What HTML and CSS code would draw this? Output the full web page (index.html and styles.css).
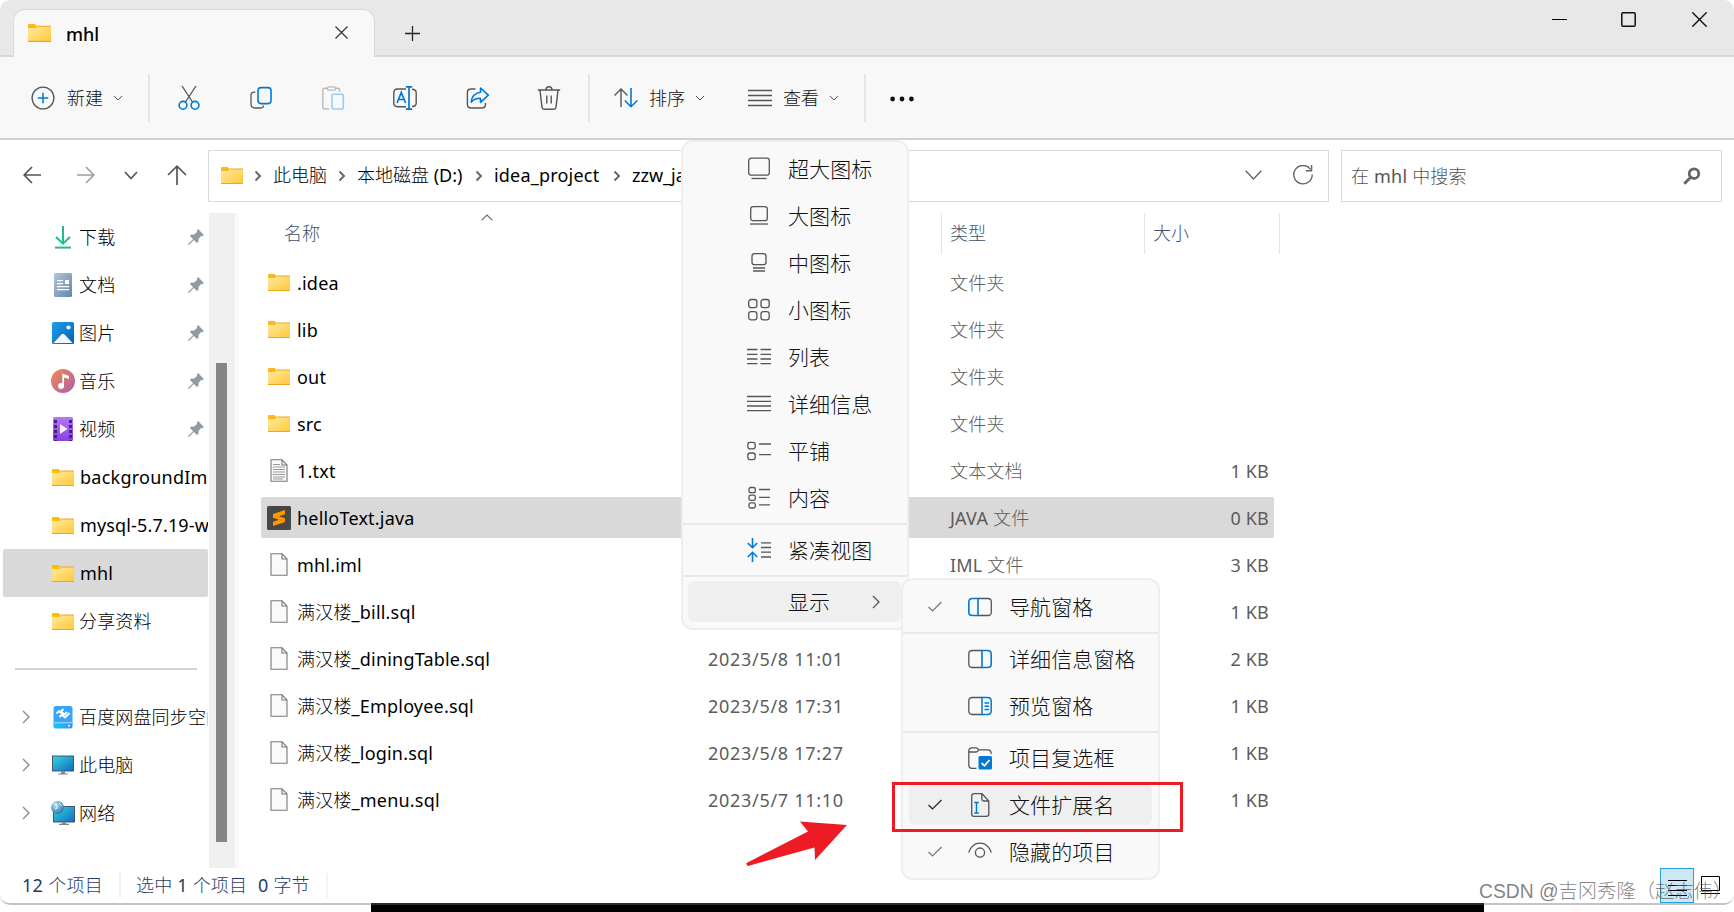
FILE: index.html
```html
<!DOCTYPE html>
<html lang="zh-CN">
<head>
  <meta charset="utf-8">
  <title>mhl</title>
  <link rel="stylesheet" href="styles.css">
</head>
<body>
  <!-- shared icons -->
  <svg class="defs" width="0" height="0">
    <defs>
      <linearGradient id="gFolder" x1="0" y1="0" x2="1" y2="1"><stop offset="0" stop-color="#ffe9a2"/><stop offset="1" stop-color="#ffc937"/></linearGradient>
      <linearGradient id="gDown" x1="0" y1="0" x2="0" y2="1"><stop offset="0" stop-color="#3fd08c"/><stop offset="1" stop-color="#0fa596"/></linearGradient>
      <linearGradient id="gDoc" x1="0" y1="0" x2="1" y2="1"><stop offset="0" stop-color="#b4c4d8"/><stop offset="1" stop-color="#6186ab"/></linearGradient>
      <linearGradient id="gPic" x1="0" y1="0" x2="1" y2="1"><stop offset="0" stop-color="#1ca0ec"/><stop offset="1" stop-color="#0a5fb4"/></linearGradient>
      <linearGradient id="gMusic" x1="0" y1="0" x2="1" y2="1"><stop offset="0" stop-color="#f58d4c"/><stop offset="1" stop-color="#a95bb0"/></linearGradient>
      <linearGradient id="gVideo" x1="0" y1="0" x2="0" y2="1"><stop offset="0" stop-color="#b478f5"/><stop offset="1" stop-color="#8a41e0"/></linearGradient>
      <linearGradient id="gPc" x1="0" y1="0" x2="1" y2="1"><stop offset="0" stop-color="#37d6dc"/><stop offset="1" stop-color="#0f6cc4"/></linearGradient>
      <linearGradient id="gDisk" x1="0" y1="0" x2="1" y2="0"><stop offset="0" stop-color="#0cc8fb"/><stop offset="1" stop-color="#3d8ffb"/></linearGradient>
      <radialGradient id="gGlobe" cx=".35" cy=".3" r=".8"><stop offset="0" stop-color="#b9e2f5"/><stop offset="1" stop-color="#1b6ea8"/></radialGradient>
      <symbol id="folder" viewBox="0 0 22 17">
        <path d="M0 1.2Q0 0 1.2 0H6.5L8.5 2V4H0Z" fill="#fdb813"/>
        <path d="M0 4H7L9 2H22V17H0Z" fill="url(#gFolder)"/>
        <path d="M8.5 2H22M0 16.5H22" stroke="#e9a820" stroke-width="1"/>
      </symbol>
      <symbol id="file" viewBox="0 0 18 23">
        <path d="M1 .8H12L17 6V22.2H1Z" fill="#fafafa" stroke="#777" stroke-width="1.1"/>
        <path d="M12 .8V6H17" fill="none" stroke="#777" stroke-width="1.1"/>
      </symbol>
      <symbol id="chev" viewBox="0 0 10 10"><path d="M1 3L5 7L9 3" fill="none" stroke="currentColor" stroke-width="1"/></symbol>
      <symbol id="crumb" viewBox="0 0 8 12"><path d="M1.5 1.5L6 6L1.5 10.5" fill="none" stroke="#666" stroke-width="1.9"/></symbol>
      <symbol id="expand" viewBox="0 0 8 14"><path d="M1 1L7 7L1 13" fill="none" stroke="#8b8b8b" stroke-width="1.4"/></symbol>
      <symbol id="check" viewBox="0 0 14 11"><path d="M.5 6L4.5 10L13.5 1" fill="none" stroke="currentColor" stroke-width="1.2"/></symbol>
      <symbol id="pin" viewBox="0 0 16 16"><path d="M10 0L16 6L14.5 7.2L13.3 6.8L10.6 10L10.4 13L9 14L5.8 11L1.2 15.8L0 16L.3 14.8L5 10.2L2 7L3 5.6L6.2 5.5L9.2 2.8L8.8 1.3Z" fill="#929ca5"/></symbol>
    </defs>
  </svg>

  <div class="window">
    <div class="titlebar">
      <div class="tab">
        <svg class="tab-folder"><use href="#folder"/></svg>
        <span class="tab-title">mhl</span>
        <svg class="tab-close" viewBox="0 0 13 13"><path d="M.5 .5L12.5 12.5M12.5 .5L.5 12.5" stroke="#333" stroke-width="1.2"/></svg>
      </div>
      <svg class="tab-add" viewBox="0 0 15 15"><path d="M7.5 0V15M0 7.5H15" stroke="#222" stroke-width="1.3"/></svg>
      <div class="controls">
        <svg width="15" height="15" viewBox="0 0 15 15"><path d="M0 7.5H15" stroke="#000" stroke-width="1.1"/></svg>
        <svg class="max" width="15" height="15" viewBox="0 0 15 15"><rect x=".8" y=".8" width="13.4" height="13.4" rx="1.2" fill="none" stroke="#111" stroke-width="1.5"/></svg>
        <svg width="15" height="15" viewBox="0 0 15 15"><path d="M.3 .3L14.7 14.7M14.7 .3L.3 14.7" stroke="#111" stroke-width="1.4"/></svg>
      </div>
    </div>

    <div class="toolbar">
      <div class="tool new">
        <svg width="24" height="24" viewBox="0 0 24 24" fill="none"><circle cx="12" cy="12" r="10.9" stroke="#555" stroke-width="1.3"/><path d="M12 6.8V17.2M6.8 12H17.2" stroke="#0078d4" stroke-width="1.5"/></svg>
        <span>新建</span>
        <svg class="chev"><use href="#chev"/></svg>
      </div>
      <div class="divider"></div>
      <div class="icons">
        <svg viewBox="0 0 24 24"><path d="M5 0L15.5 16M19 0L8.5 16" stroke="#555" stroke-width="1.3"/><g stroke="#0078d4" stroke-width="1.6"><circle cx="6" cy="19.3" r="3.9"/><circle cx="18" cy="19.3" r="3.9"/></g></svg>
        <svg viewBox="0 0 24 24"><path d="M6.3 6.2H5Q2 6.2 2 9.5V18Q2 22 6 22H11Q14.5 22 14.5 19.5" stroke="#555" stroke-width="1.3"/><rect x="9" y="1.6" width="13" height="16" rx="3" stroke="#0078d4" stroke-width="1.6"/></svg>
        <svg viewBox="0 0 24 24"><path d="M6 2.3H3.5Q1.8 2.3 1.8 4V21.5Q1.8 23 3.5 23H8M15 2.3H17Q18.6 2.3 18.6 4V6" stroke="#b9b9b9" stroke-width="1.4"/><rect x="6.3" y=".8" width="8.4" height="3.4" rx="1.7" stroke="#b9b9b9" stroke-width="1.3"/><rect x="11" y="8.2" width="11.3" height="14.8" rx="1.4" fill="#f5faff" stroke="#9dcbf0" stroke-width="1.6"/></svg>
        <svg viewBox="0 0 24 24"><path d="M13 3H4.5Q.8 3 .8 7V17Q.8 20.7 4.5 20.7H13M19 3.2Q23.2 3.2 23.2 7V17Q23.2 20.5 19 20.5" stroke="#555" stroke-width="1.4"/><path d="M4 17L8.3 6.5L12.6 17M5.4 13.5H11.2M12.8 .8H19.2M12.8 23.2H19.2M16 .8V23.2" stroke="#0078d4" stroke-width="1.7"/></svg>
        <svg viewBox="0 0 24 24"><path d="M10.5 3H6Q2.4 3 2.4 6.5V18.5Q2.4 22 6 22H16.5Q20.5 22 20.5 18.5V17" stroke="#555" stroke-width="1.4"/><path d="M15.5 2L23.3 9.2L15.5 16.3V12.2Q9.5 12 6.2 16.2Q7 7.5 15.5 6.3Z" stroke="#0078d4" stroke-width="1.6" stroke-linejoin="round"/></svg>
        <svg viewBox="0 0 24 24"><path d="M.8 4H23.2M3 4L5 21.3Q5.3 23.2 7 23.2H17Q18.7 23.2 19 21.3L21 4M9 3.8Q9 .8 12 .8Q15 .8 15 3.8M9.8 9.5V17.5M14.2 9.5V17.5" stroke="#555" stroke-width="1.4"/></svg>
      </div>
      <div class="divider"></div>
      <div class="tool sort">
        <svg width="24" height="20" viewBox="0 0 24 20" fill="none"><path d="M7 19V1M.5 7.5L7 1L13.5 7.5" stroke="#555" stroke-width="1.4"/><path d="M17 0V18.5M10.8 12.5L17 18.7L23.4 12.5" stroke="#0078d4" stroke-width="1.6"/></svg>
        <span>排序</span>
        <svg class="chev"><use href="#chev"/></svg>
      </div>
      <div class="tool view">
        <svg width="24" height="18" viewBox="0 0 24 18"><path d="M0 1.5H24M0 6.5H24M0 11.5H24M0 16.5H24" stroke="#555" stroke-width="1.4"/></svg>
        <span>查看</span>
        <svg class="chev"><use href="#chev"/></svg>
      </div>
      <div class="divider"></div>
      <svg class="more" viewBox="0 0 24 6"><circle cx="2.6" cy="3" r="2.4"/><circle cx="12" cy="3" r="2.4"/><circle cx="21.4" cy="3" r="2.4"/></svg>
    </div>

    <div class="navbar">
      <div class="arrows">
        <svg width="18" height="18" viewBox="0 0 18 18"><path d="M18 9H1.2M9 1L1.2 9L9 17" stroke="#555" stroke-width="1.7"/></svg>
        <svg class="forward" width="18" height="18" viewBox="0 0 18 18"><path d="M0 9H16.8M9 1L16.8 9L9 17" stroke="#a0a0a0" stroke-width="1.7"/></svg>
        <svg class="recent" width="14" height="9" viewBox="0 0 14 9"><path d="M1 1L7 7.5L13 1" stroke="#555" stroke-width="1.7"/></svg>
        <svg class="up" width="20" height="20" viewBox="0 0 20 20"><path d="M10 20V1.2M1 10L10 1.2L19 10" stroke="#555" stroke-width="1.7"/></svg>
      </div>
      <div class="address">
        <svg class="icon-folder"><use href="#folder"/></svg>
        <svg class="crumb"><use href="#crumb"/></svg>
        <span class="c1">此电脑</span>
        <svg class="crumb"><use href="#crumb"/></svg>
        <span class="c2">本地磁盘 (D:)</span>
        <svg class="crumb"><use href="#crumb"/></svg>
        <span class="c3">idea_project</span>
        <svg class="crumb"><use href="#crumb"/></svg>
        <span class="c4">zzw_java</span>
        <svg class="addr-drop" viewBox="0 0 17 10"><path d="M.7 .7L8.5 9L16.3 .7" fill="none" stroke="#666" stroke-width="1.4"/></svg>
        <svg class="refresh" viewBox="0 0 20 20"><path d="M17.5 4.3A9.2 9.2 0 1 0 19.2 9.5M18.6 0V5.8H12.8" fill="none" stroke="#666" stroke-width="1.4"/></svg>
      </div>
      <div class="search">
        <span>在 mhl 中搜索</span>
        <svg width="18" height="18" viewBox="0 0 18 18"><circle cx="11" cy="6.7" r="4.8" fill="none" stroke="#666" stroke-width="2.8"/><path d="M7.5 10.5L1.3 16.7" stroke="#666" stroke-width="3"/></svg>
      </div>
    </div>

    <div class="main">
      <div class="sidebar">
        <div class="side-row"><svg class="side-icon" viewBox="0 0 24 24"><path d="M12 1V18.5M5 12L12 18.7L19 12" fill="none" stroke="#22b892" stroke-width="2"/><rect x="4" y="21.5" width="16" height="2" fill="url(#gDown)"/></svg><span>下载</span><svg class="pin"><use href="#pin"/></svg></div>
        <div class="side-row"><svg class="side-icon" viewBox="0 0 24 24"><rect x="3" width="18" height="24" rx="1.5" fill="url(#gDoc)"/><path d="M6 7.6H12M6 10.6H12M6 13.6H18M6 16.6H18" stroke="#fff" stroke-width="1.3"/><rect x="14" y="7" width="4" height="4" fill="#fff"/></svg><span>文档</span><svg class="pin"><use href="#pin"/></svg></div>
        <div class="side-row"><svg class="side-icon" viewBox="0 0 24 24"><rect x="1" y="1" width="22" height="22" rx="1.5" fill="url(#gPic)"/><path d="M2.5 22L10.5 13.5Q12 12 13.5 13.5L21.5 22Z" fill="#f3f8ff"/><circle cx="17.5" cy="6.5" r="2.1" fill="#fff"/></svg><span>图片</span><svg class="pin"><use href="#pin"/></svg></div>
        <div class="side-row"><svg class="side-icon" viewBox="0 0 24 24"><circle cx="12" cy="12" r="12" fill="url(#gMusic)"/><circle cx="10" cy="17" r="3" fill="#fff"/><path d="M11.3 4.5L18 7V10L13 8.4V17H11.3Z" fill="#fff"/></svg><span>音乐</span><svg class="pin"><use href="#pin"/></svg></div>
        <div class="side-row"><svg class="side-icon" viewBox="0 0 24 24"><rect x="2" width="20" height="24" rx="1.5" fill="url(#gVideo)"/><path d="M4.5 3V24M19.5 3V24" stroke="#4b1d86" stroke-width="3" stroke-dasharray="3 2"/><path d="M9 7L16.5 12L9 17Z" fill="#f2eef8"/></svg><span>视频</span><svg class="pin"><use href="#pin"/></svg></div>
        <div class="side-row"><svg class="side-folder"><use href="#folder"/></svg><span class="en wide">backgroundIm</span></div>
        <div class="side-row"><svg class="side-folder"><use href="#folder"/></svg><span class="en">mysql-5.7.19-w</span></div>
        <div class="side-row active"><svg class="side-folder"><use href="#folder"/></svg><span class="en">mhl</span></div>
        <div class="side-row"><svg class="side-folder"><use href="#folder"/></svg><span>分享资料</span></div>
        <div class="side-line"></div>
        <div class="side-row tree"><svg class="expand"><use href="#expand"/></svg><svg class="side-icon" viewBox="0 0 24 24"><rect x="2.5" y="1" width="19" height="20" rx="2.5" fill="#38a5fb"/><path d="M2.5 18H21.5V21.5Q21.5 23.5 19.5 23.5H4.5Q2.5 23.5 2.5 21.5Z" fill="url(#gDisk)"/><path d="M3 17.8H21" stroke="#d9f2ff" stroke-width=".8"/><circle cx="18" cy="20.7" r="1" fill="#fff"/><path d="M5.5 8.5L8 6L11.5 9L8.5 12M12.5 4L10 6.5L13.5 9.5L16 7M18.5 8L14 12.5L11 10" fill="none" stroke="#fff" stroke-width="1.9"/></svg><span>百度网盘同步空间</span></div>
        <div class="side-row tree"><svg class="expand"><use href="#expand"/></svg><svg class="side-icon" viewBox="0 0 24 24"><rect x="1.5" y="3" width="21" height="15" fill="url(#gPc)" stroke="#446" stroke-width=".9"/><path d="M10 18.5H14V20.5H17V21.5H7V20.5H10Z" fill="#7b858c"/></svg><span>此电脑</span></div>
        <div class="side-row tree"><svg class="expand"><use href="#expand"/></svg><svg class="side-icon" viewBox="0 0 24 24"><rect x="2.5" y="5.5" width="21" height="15.5" fill="url(#gPc)" stroke="#446" stroke-width=".9"/><path d="M11 21.5H15V22.8H18V24H8V22.8H11Z" fill="#7b858c"/><circle cx="6.5" cy="6.5" r="6.5" fill="url(#gGlobe)"/><path d="M3 3Q6 2 6 5Q7 8 4 8M8 2L11 5" stroke="#e6f5fc" fill="none"/></svg><span>网络</span></div>
      </div>
      <div class="scrollbar"><div class="thumb"></div></div>
      <div class="files">
        <div class="head">
          <svg class="sort-up" viewBox="0 0 12 7"><path d="M.6 6.4L6 1L11.4 6.4" fill="none" stroke="#666" stroke-width="1.1"/></svg>
          <span class="h-name">名称</span><span class="h-type">类型</span><span class="h-size">大小</span>
        </div>
        <div class="row"><svg class="icon-folder"><use href="#folder"/></svg><span class="name">.idea</span><span class="date"></span><span class="type">文件夹</span><span class="size"></span></div>
        <div class="row"><svg class="icon-folder"><use href="#folder"/></svg><span class="name">lib</span><span class="date"></span><span class="type">文件夹</span><span class="size"></span></div>
        <div class="row"><svg class="icon-folder"><use href="#folder"/></svg><span class="name">out</span><span class="date"></span><span class="type">文件夹</span><span class="size"></span></div>
        <div class="row"><svg class="icon-folder"><use href="#folder"/></svg><span class="name">src</span><span class="date"></span><span class="type">文件夹</span><span class="size"></span></div>
        <div class="row"><svg class="icon-file" viewBox="0 0 18 23"><use href="#file" width="18" height="23"/><path d="M3 5.5H10M3 8H15M3 10.5H15M3 13H15M3 15.5H15M3 18H15M3 20H13" stroke="#999" stroke-width="1"/></svg><span class="name">1.txt</span><span class="date"></span><span class="type">文本文档</span><span class="size">1 KB</span></div>
        <div class="row selected"><svg class="icon-sublime" viewBox="0 0 24 24"><rect width="24" height="24" rx="1.5" fill="#474747"/><path d="M6 8L18 4V8.2L12 10.3L18 12.2V16L6 20V15.8L12 13.7L6 11.8Z" fill="#ff9800"/></svg><span class="name">helloText.java</span><span class="date"></span><span class="type">JAVA 文件</span><span class="size">0 KB</span></div>
        <div class="row"><svg class="icon-file"><use href="#file"/></svg><span class="name">mhl.iml</span><span class="date"></span><span class="type">IML 文件</span><span class="size">3 KB</span></div>
        <div class="row"><svg class="icon-file"><use href="#file"/></svg><span class="name">满汉楼_bill.sql</span><span class="date"></span><span class="type"></span><span class="size">1 KB</span></div>
        <div class="row"><svg class="icon-file"><use href="#file"/></svg><span class="name">满汉楼_diningTable.sql</span><span class="date">2023/5/8 11:01</span><span class="type"></span><span class="size">2 KB</span></div>
        <div class="row"><svg class="icon-file"><use href="#file"/></svg><span class="name">满汉楼_Employee.sql</span><span class="date">2023/5/8 17:31</span><span class="type"></span><span class="size">1 KB</span></div>
        <div class="row"><svg class="icon-file"><use href="#file"/></svg><span class="name">满汉楼_login.sql</span><span class="date">2023/5/8 17:27</span><span class="type"></span><span class="size">1 KB</span></div>
        <div class="row"><svg class="icon-file"><use href="#file"/></svg><span class="name">满汉楼_menu.sql</span><span class="date">2023/5/7 11:10</span><span class="type"></span><span class="size">1 KB</span></div>
      </div>
    </div>

    <div class="statusbar">
      <span class="s1">12 个项目</span>
      <span class="s2">选中 1 个项目</span>
      <span class="s3">0 字节</span>
      <div class="modes">
        <div class="mode on"><svg width="19" height="19" viewBox="0 0 19 19"><path d="M0 3.5H19M0 8.5H19M0 13.5H19M0 18.5H19" stroke="#000" stroke-width="1"/></svg></div>
        <div class="mode"><svg width="19" height="19" viewBox="0 0 19 19"><path d="M.5 .5H18.5V14.5H.5ZM0 17.5H19" fill="none" stroke="#000" stroke-width="1"/></svg></div>
      </div>
    </div>
  </div>
  <div class="behind"></div>

  <!-- view menu -->
  <div class="menu view-menu">
    <div class="item"><svg viewBox="0 0 24 24"><rect x="1.7" y="1.2" width="20.6" height="17" rx="2.5"/><path d="M4.5 21.5H19.5"/></svg><span>超大图标</span></div>
    <div class="item"><svg viewBox="0 0 24 24"><rect x="3.7" y="2.7" width="16.6" height="14" rx="2.5"/><path d="M3 20H21"/></svg><span>大图标</span></div>
    <div class="item"><svg viewBox="0 0 24 24"><rect x="5" y="2.7" width="14" height="11" rx="2.5"/><path d="M6 17H18M6 20H18"/></svg><span>中图标</span></div>
    <div class="item"><svg viewBox="0 0 24 24"><rect x="1.7" y="1.5" width="8.2" height="8.2" rx="2.4"/><rect x="14" y="1.5" width="8.2" height="8.2" rx="2.4"/><rect x="1.7" y="13.6" width="8.2" height="8.2" rx="2.4"/><rect x="14" y="13.6" width="8.2" height="8.2" rx="2.4"/></svg><span>小图标</span></div>
    <div class="item"><svg viewBox="0 0 24 24"><path d="M0 4.5H10.5M13.5 4.5H24M0 9.3H10.5M13.5 9.3H24M0 14H10.5M13.5 14H24M0 18.7H10.5M13.5 18.7H24"/></svg><span>列表</span></div>
    <div class="item"><svg viewBox="0 0 24 24"><path d="M0 4.5H24M0 9.3H24M0 14H24M0 18.7H24"/></svg><span>详细信息</span></div>
    <div class="item"><svg viewBox="0 0 24 24"><rect x=".8" y="3.3" width="7.4" height="6.6" rx="2.3"/><rect x=".8" y="14" width="7.4" height="6.6" rx="2.3"/><path d="M12 5H24M12 15.7H24"/></svg><span>平铺</span></div>
    <div class="item"><svg viewBox="0 0 24 24"><rect x="2" y="1.5" width="6.3" height="5.2" rx="1.7"/><rect x="2" y="9.2" width="6.3" height="5.2" rx="1.7"/><rect x="2" y="16.8" width="6.3" height="5.2" rx="1.7"/><path d="M12 3.5H23M12 11.3H23M12 18.8H23"/></svg><span>内容</span></div>
    <div class="menu-line"></div>
    <div class="item"><svg viewBox="0 0 24 24"><path d="M5.5 0V9.5M.8 5L5.5 9.7L10.2 5M5.5 24V14.5M.8 19L5.5 14.3L10.2 19" stroke="#0078d4" stroke-width="1.6"/><path d="M14 4.8H24M14 9.5H24M14 14.2H24M14 19H24"/></svg><span>紧凑视图</span></div>
    <div class="menu-line"></div>
    <div class="item hover"><span>显示</span><svg class="sub-arrow" viewBox="0 0 8 14"><path d="M1 1L7 7L1 13"/></svg></div>
  </div>

  <!-- show submenu -->
  <div class="menu show-menu">
    <div class="item"><svg class="check"><use href="#check"/></svg><svg viewBox="0 0 24 24"><path d="M10 3.5H20Q23.3 3.5 23.3 7V17Q23.3 20.5 20 20.5H10"/><path d="M10 3.5H4.5Q.8 3.5 .8 7V17Q.8 20.5 4.5 20.5H10Z" stroke="#0078d4" stroke-width="1.6"/></svg><span>导航窗格</span></div>
    <div class="menu-line"></div>
    <div class="item"><svg viewBox="0 0 24 24"><path d="M14 3.5H4.5Q.8 3.5 .8 7V17Q.8 20.5 4.5 20.5H14"/><path d="M14 3.5H19.5Q23.2 3.5 23.2 7V17Q23.2 20.5 19.5 20.5H14Z" stroke="#0078d4" stroke-width="1.6"/></svg><span>详细信息窗格</span></div>
    <div class="item"><svg viewBox="0 0 24 24"><path d="M14 3.5H4.5Q.8 3.5 .8 7V17Q.8 20.5 4.5 20.5H14"/><path d="M14 3.5H19.5Q23.2 3.5 23.2 7V17Q23.2 20.5 19.5 20.5H14ZM16.5 9H21M16.5 12.3H21M16.5 15.6H21" stroke="#0078d4" stroke-width="1.5"/></svg><span>预览窗格</span></div>
    <div class="menu-line"></div>
    <div class="item"><svg viewBox="0 0 24 24"><path d="M8.5 22.3H4Q.8 22.3 .8 19V5Q.8 1.8 4 1.8H8Q9.5 1.8 10.5 3.8H20Q23.2 3.8 23.2 8M.8 6H8Q10 6 10.5 3.8"/><rect x="10.5" y="10" width="13.5" height="13.5" rx="1.5" fill="#0078d4" stroke="none"/><path d="M13.5 17L16.5 19.7L21.5 14" stroke="#fff" stroke-width="1.7"/></svg><span>项目复选框</span></div>
    <div class="item hover"><svg class="check dark"><use href="#check"/></svg><svg viewBox="0 0 24 24"><path d="M14 .7H6Q3.7 .7 3.7 3V21Q3.7 23.3 6 23.3H18.5Q20.8 23.3 20.8 21V8Z M13.8 .7V5.5Q13.8 8 16.3 8H20.8"/><path d="M8.5 9.5V20M6.2 9.5H10.8M6.2 20H10.8" stroke="#0078d4" stroke-width="1.4"/></svg><span>文件扩展名</span></div>
    <div class="item"><svg class="check"><use href="#check"/></svg><svg viewBox="0 0 24 24"><path d="M.7 12.5Q4 3.2 12 3.2Q20 3.2 23.3 12.5"/><circle cx="12" cy="12.6" r="4.6"/></svg><span>隐藏的项目</span></div>
  </div>

  <!-- annotations -->
  <div class="mark"></div>
  <svg class="arrow" viewBox="0 0 102 46"><path d="M.5 42L62 10.5L54 .5L101 4L69 39L68.5 26.5L2 45Q0 44 .5 42Z" fill="#ed1c24"/></svg>
  <div class="watermark">CSDN @吉冈秀隆（赵志伟）</div>
</body>
</html>
```

FILE: styles.css
```css
* {
  box-sizing: border-box;
}

body {
  margin: 0;
  width: 1734px;
  height: 912px;
  overflow: hidden;
  position: relative;
  background: #fff;
  font-family: "Noto Sans", "Noto Sans CJK SC", sans-serif;
  font-size: 18px;
  line-height: 24px;
  color: #000;
}

span:lang(zh-CN) {
  font-family: "Noto Sans", "Noto Sans CJK SC Light", "Noto Sans CJK SC", sans-serif;
}

svg {
  display: block;
  flex: none;
}

span {
  white-space: nowrap;
}

.defs {
  position: absolute;
}

.window {
  height: 905px;
  display: flex;
  flex-direction: column;
  border-bottom: 2px solid #c4c4c4;
  border-radius: 10px;
  overflow: hidden;
}

.behind {
  width: 1113px;
  height: 9px;
  margin: -2px 0 0 371px;
  background: #000;
  border-top: 2px solid #2b2b2b;
  position: relative;
}

/* title bar */
.titlebar {
  height: 57px;
  flex: none;
  display: flex;
  background: #e8e8e8;
  border-bottom: 2px solid #d8d8d8;
}

.tab {
  width: 362px;
  height: 48px;
  margin: 9px 0 0 13px;
  padding: 0 26px 2px 14px;
  display: flex;
  align-items: center;
  background: #f8f8f8;
  border: 1px solid #dadada;
  border-bottom: none;
  border-radius: 12px 12px 0 0;
}

.tab-folder {
  width: 23px;
  height: 18px;
}

.tab-title {
  margin: 2px 0 0 15px;
  font-weight: 500;
}

.tab-close {
  width: 13px;
  height: 13px;
  margin-left: auto;
}

.tab-add {
  width: 15px;
  height: 15px;
  margin: 26px 0 0 30px;
}

.controls {
  display: flex;
  gap: 55px;
  margin: 12px 27px 0 auto;
}

.controls .max {
  margin: 0 1px 0 -1px;
}

/* toolbar */
.toolbar {
  height: 83px;
  flex: none;
  display: flex;
  align-items: center;
  background: #f8f8f8;
  border-bottom: 2px solid #d2d2d2;
  color: #111;
}

.tool {
  display: flex;
  align-items: center;
}

.tool span {
  width: 37px;
}

.chev {
  width: 10px;
  height: 10px;
  margin-left: 9px;
  color: #555;
}

.new {
  width: 148px;
  padding-left: 31px;
}

.new span {
  margin-left: 12px;
}

.divider {
  width: 2px;
  height: 48px;
  background: #e5e5e5;
}

.icons {
  width: 438px;
  padding-left: 27px;
  display: flex;
  gap: 48px;
}

.icons svg {
  width: 24px;
  height: 24px;
  fill: none;
}

.sort {
  margin-left: 24px;
  width: 134px;
}

.sort span,
.view span {
  margin-left: 11px;
}

.view {
  width: 116px;
}

.more {
  width: 24px;
  height: 6px;
  margin: 2px 0 0 24px;
  fill: #111;
}

/* address row */
.navbar {
  height: 73px;
  flex: none;
  display: flex;
  padding: 10px 12px 11px 0;
}

.arrows {
  width: 208px;
  padding: 0 0 2px 23px;
  display: flex;
  align-items: center;
}

.arrows svg {
  fill: none;
}

.forward {
  margin-left: 36px;
}

.recent {
  margin-left: 29px;
}

.up {
  margin-left: 29px;
}

.address {
  width: 1121px;
  display: flex;
  align-items: center;
  padding: 0 15px 2px 12px;
  border: 1px solid #d9d9d9;
}

.crumb {
  width: 8px;
  height: 12px;
  margin: 2px 11px 0 11px;
}

.c1 {
  width: 54px;
}

.c2 {
  width: 107px;
}

.c3 {
  width: 108px;
  letter-spacing: .2px;
}

.addr-drop {
  width: 17px;
  height: 10px;
  margin-left: auto;
}

.refresh {
  width: 20px;
  height: 20px;
  margin-left: 31px;
}

.search {
  flex: 1;
  margin-left: 12px;
  padding: 0 20px 0 9px;
  display: flex;
  align-items: center;
  justify-content: space-between;
  border: 1px solid #d9d9d9;
  color: #555;
}

.search span {
  letter-spacing: .2px;
}

/* main area */
.main {
  height: 655px;
  flex: none;
  display: flex;
}

.sidebar {
  width: 208px;
  padding-left: 3px;
  overflow: hidden;
}

.side-row {
  height: 48px;
  display: flex;
  align-items: center;
  padding-left: 48px;
  overflow: hidden;
}

.side-row span {
  margin-left: 4px;
  letter-spacing: .15px;
}

.side-row span.en {
  margin-left: 5px;
}

.side-row span.wide {
  letter-spacing: .25px;
}

.side-row.active {
  background: #d9d9d9;
  border-radius: 2px;
}

.side-icon {
  width: 24px;
  height: 24px;
}

.side-folder {
  width: 22px;
  height: 17px;
  margin: 0 1px;
}

.pin {
  width: 16px;
  height: 16px;
  margin: 0 4px 0 auto;
}

.side-line {
  height: 2px;
  margin: 23px 11px 23px 12px;
  background: #d4d4d4;
}

.tree {
  padding-left: 19px;
}

.expand {
  width: 8px;
  height: 14px;
  margin-right: 21px;
}

.scrollbar {
  width: 26px;
  margin-left: 1px;
  margin-right: 1px;
  padding: 150px 7px 26px;
  background: #f0f0f0;
}

.thumb {
  width: 11px;
  height: 479px;
  background: #868686;
}

.files {
  flex: 1;
  border-left: 2px solid #f7f7f7;
  padding-left: 23px;
}

.head {
  height: 46px;
  position: relative;
  display: flex;
  color: #3c5270;
}

.head span {
  height: 41px;
  padding-top: 8px;
}

.h-name {
  width: 680px;
  padding-left: 23px;
}

.h-type {
  width: 203px;
  padding-left: 8px;
  border-left: 1px solid #e5e5e5;
}

.h-size {
  width: 136px;
  padding-left: 8px;
  border-left: 1px solid #e5e5e5;
  border-right: 1px solid #e5e5e5;
}

/* sits above the column title */
.sort-up {
  position: absolute;
  left: 220px;
  top: 1px;
  width: 12px;
  height: 7px;
}

.row {
  width: 1013px;
  height: 41px;
  margin: 3px 0 6px;
  padding: 0 5px 0 7px;
  display: flex;
  align-items: center;
  border-radius: 2px;
}

.row.selected {
  background: #d9d9d9;
}

.icon-folder {
  width: 22px;
  height: 17px;
}

.icon-file {
  width: 18px;
  height: 23px;
  margin: 0 2px;
}

.icon-sublime {
  width: 24px;
  height: 24px;
  margin: 0 -1px;
}

.name {
  width: 411px;
  margin-left: 7px;
  letter-spacing: .2px;
}

.date {
  width: 242px;
  color: #5c5c5c;
  letter-spacing: .7px;
}

.type {
  width: 200px;
  color: #5c5c5c;
  letter-spacing: .2px;
}

.size {
  flex: 1;
  text-align: right;
  color: #5c5c5c;
  letter-spacing: .2px;
}

/* status bar */
.statusbar {
  height: 35px;
  flex: none;
  display: flex;
  color: #1e3c64;
  padding: 5px 6px 0 22px;
}

.s1 {
  width: 99px;
  height: 25px;
  border-right: 2px solid #f3f3f3;
  letter-spacing: .3px;
}

.s2 {
  width: 137px;
  padding-left: 15px;
  letter-spacing: .2px;
}

.s3 {
  width: 70px;
  height: 25px;
  border-right: 2px solid #f3f3f3;
  letter-spacing: .2px;
}

.modes {
  display: flex;
  margin: -5px 0 0 auto;
}

.mode {
  width: 34px;
  height: 35px;
  padding: 8px 7px;
}

.mode.on {
  background: #cce8f7;
  border: 1px solid #26a0da;
}

/* menus */
.menu {
  position: absolute;
  background: #f9f9f9;
  border: 2px solid #eee;
  border-radius: 12px;
  color: #111;
  font-size: 21px;
  line-height: 28px;
}

.view-menu {
  left: 681px;
  top: 140px;
  width: 228px;
  height: 490px;
  padding-top: 6px;
}

.show-menu {
  left: 901px;
  top: 578px;
  width: 259px;
  height: 302px;
  padding-top: 6px;
}

.item {
  height: 41px;
  margin: 0 6px 6px;
  display: flex;
  align-items: center;
  border-radius: 6px;
}

.item svg {
  width: 24px;
  height: 24px;
  margin-left: 58px;
  fill: none;
  stroke: #555;
  stroke-width: 1.3;
}

.item span {
  margin-left: 17px;
  letter-spacing: .1px;
}

.item.hover {
  background: #efefef;
}

.view-menu .item.hover {
  margin-left: 5px;
}

.view-menu .item.hover span {
  margin-left: 100px;
}

.item .sub-arrow {
  width: 8px;
  height: 14px;
  margin-left: 42px;
}

.menu-line {
  height: 2px;
  margin: -1px 0 4px;
  background: #e8e8e8;
}

.show-menu .item svg {
  margin-left: 59px;
}

.show-menu .item .check {
  width: 14px;
  height: 11px;
  margin: 0 -33px 0 19px;
  color: #777;
  stroke: none;
}

.show-menu .item .check.dark {
  color: #222;
}

.mark {
  position: absolute;
  left: 892px;
  top: 782px;
  width: 291px;
  height: 50px;
  border: 3px solid #ed1c24;
}

.arrow {
  position: absolute;
  left: 746px;
  top: 821px;
  width: 102px;
  height: 46px;
}

.watermark {
  position: absolute;
  left: 1479px;
  top: 880px;
  font-family: "Liberation Sans", "Noto Sans CJK SC Light", "Noto Sans CJK SC", sans-serif;
  font-size: 19.3px;
  white-space: nowrap;
  color: rgba(90, 90, 90, .75);
}
```
